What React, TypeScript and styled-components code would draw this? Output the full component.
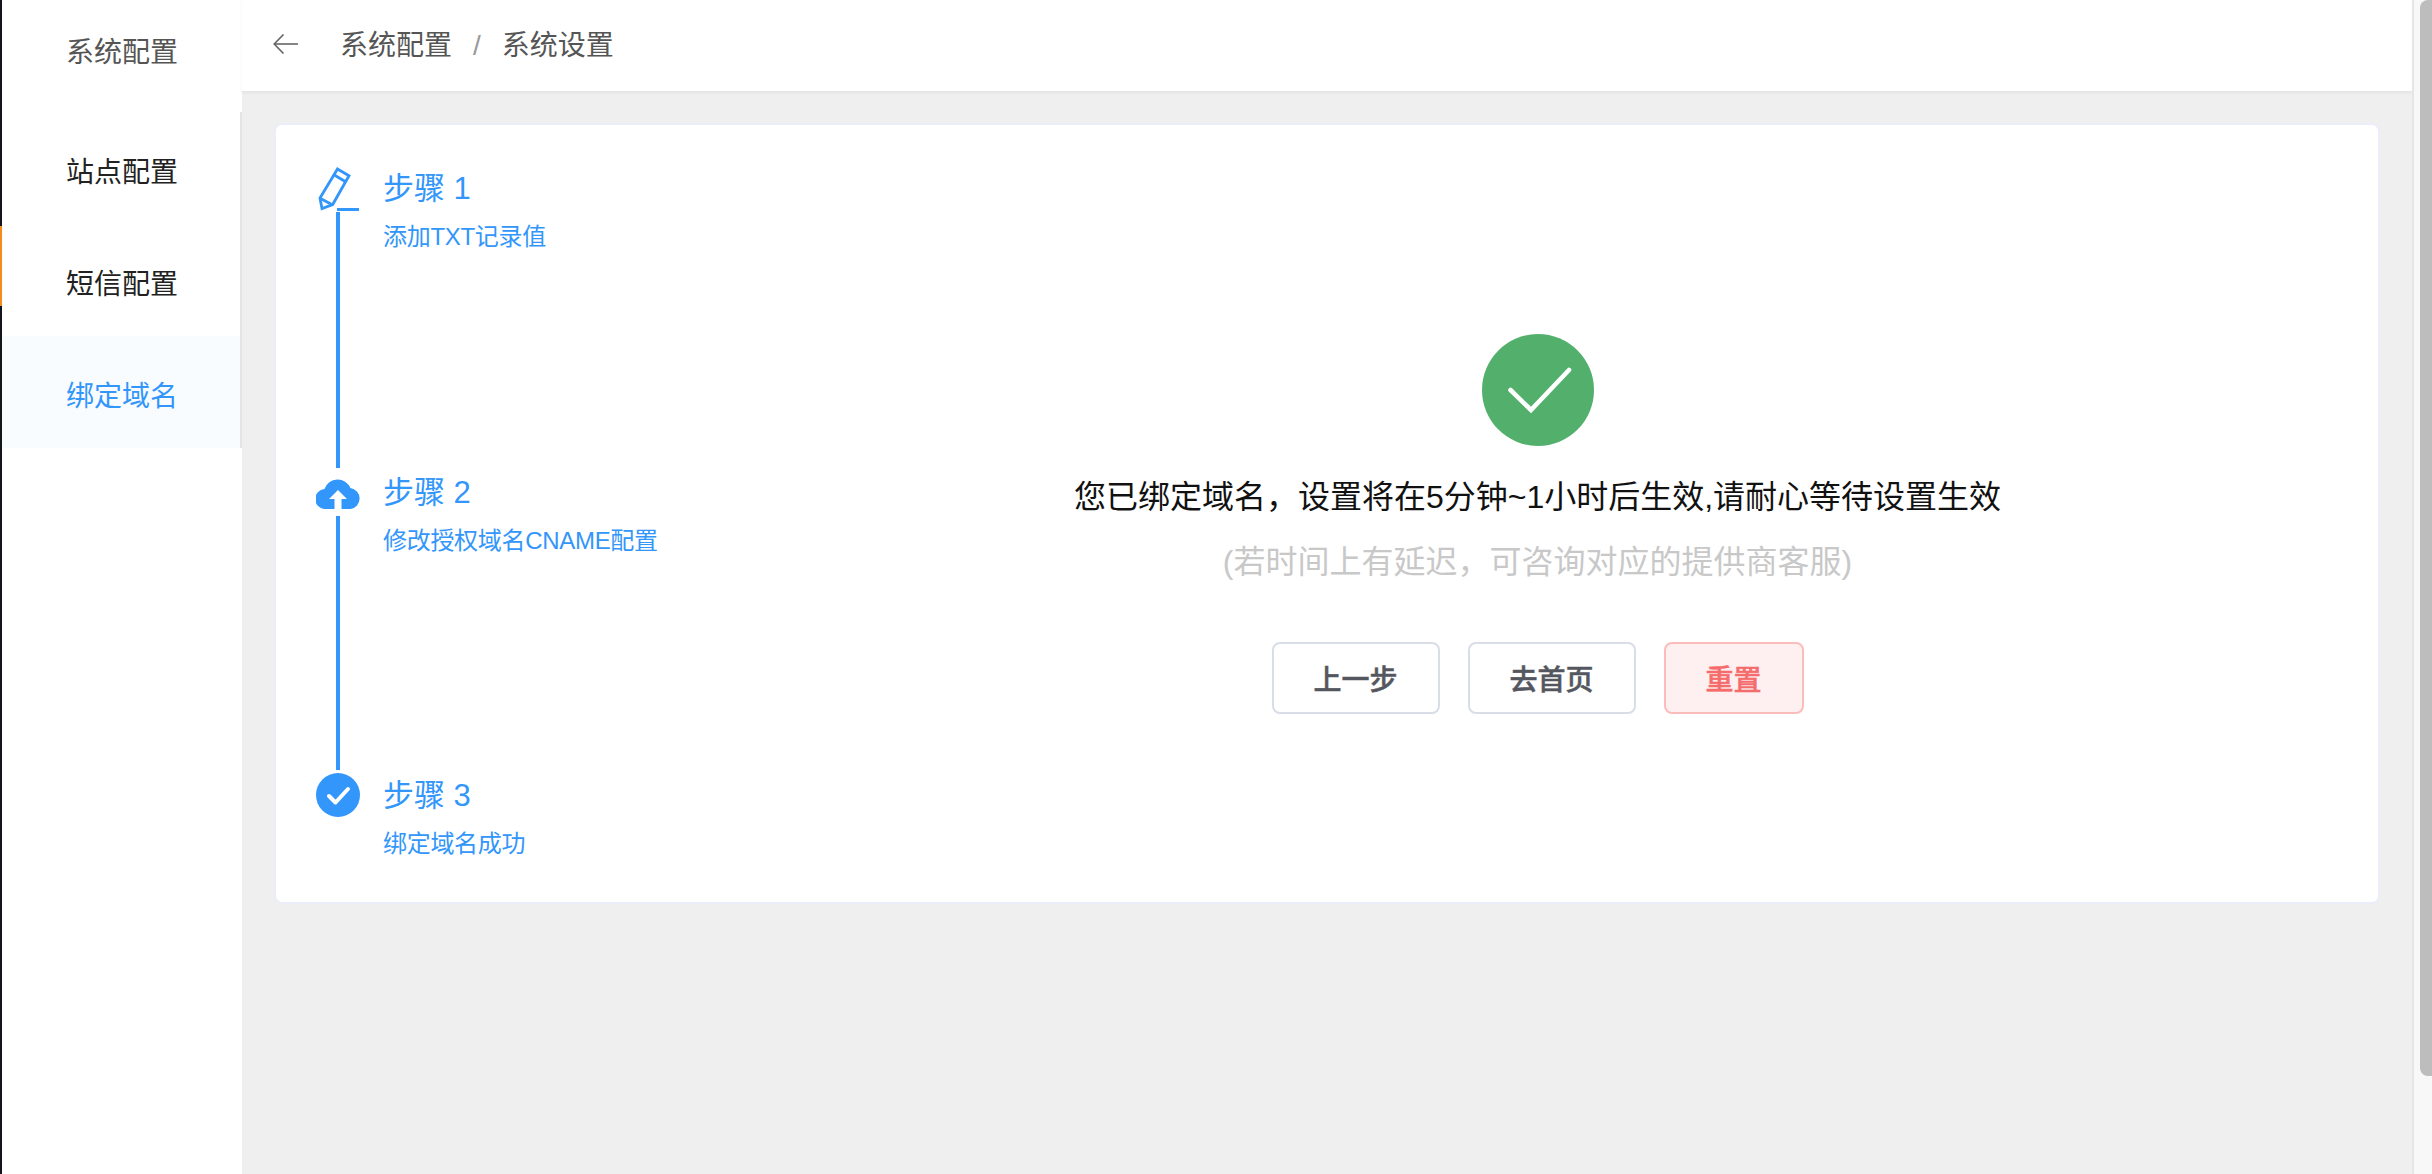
import React from "react";
import styled, { createGlobalStyle } from "styled-components";

const Global = createGlobalStyle`
  html, body { margin: 0; padding: 0; height: 100%; overflow: hidden; }
  body { font-family: "Liberation Sans", "Noto Sans CJK SC", sans-serif; background: #eee; }
  #root { height: 100%; }
  * { box-sizing: border-box; }
`;

const blue = "#3296fa";

const Page = styled.div`
  display: flex;
  width: 2432px;
  height: 1174px;
  background: #efefef;
`;
const Rail = styled.div`
  width: 2px;
  flex: none;
  display: flex;
  flex-direction: column;
`;
const RailDark = styled.div<{ $h: number }>`
  height: ${(p) => p.$h}px;
  background: #14151c;
`;
const RailMark = styled.div`
  height: 80px;
  background: #f58a1f;
`;
const Sidebar = styled.aside`
  width: 240px;
  flex: none;
  background: #fff;
  display: flex;
  flex-direction: column;
`;
const SideTitle = styled.div`
  height: 112px;
  padding: 35px 0 0 64px;
  font-size: 28px;
  line-height: 36px;
  color: #555;
`;
const SideItem = styled.div<{ $active?: boolean }>`
  height: 112px;
  padding: 4px 0 0 64px;
  display: flex;
  align-items: center;
  font-size: 28px;
  color: ${(p) => (p.$active ? blue : "#222")};
  background: ${(p) => (p.$active ? "#f8fcff" : "#fff")};
  border-right: 2px solid #e4e4e4;
`;
const Main = styled.main`
  flex: 1;
  min-width: 0;
  display: flex;
  flex-direction: column;
`;
const TopBar = styled.header`
  height: 92px;
  flex: none;
  background: #fff;
  display: flex;
  align-items: center;
  padding: 0 0 4px 31px;
  border-bottom: 1px solid #e6e6e6;
  box-shadow: 0 1px 3px rgba(0, 0, 0, 0.05);
  font-size: 28px;
  color: #555;
`;
const Crumbs = styled.div`
  margin: 0 0 2px 42px;
  display: flex;
  align-items: baseline;
  gap: 21px;
`;
const Sep = styled.span`
  color: #999;
`;
const Content = styled.div`
  padding: 31px 0 0 32px;
`;
const Card = styled.section`
  width: 2106px;
  height: 781px;
  background: #fff;
  border: 2px solid #ecedfa;
  border-radius: 8px;
  display: flex;
`;
const Steps = styled.div`
  width: 421px;
  flex: none;
  padding: 42px 0 0 40px;
  display: flex;
  flex-direction: column;
`;
const Step = styled.div<{ $h: number }>`
  display: flex;
  height: ${(p) => p.$h}px;
`;
const Rule = styled.div<{ $mt: number; $h: number }>`
  width: 4px;
  margin-top: ${(p) => p.$mt}px;
  margin-left: 20px;
  height: ${(p) => p.$h}px;
  background: ${blue};
`;
const StepIcon = styled.div`
  width: 44px;
  flex: none;
  display: flex;
  flex-direction: column;
`;
const StepText = styled.div<{ $top: number }>`
  margin-left: 23px;
  margin-top: ${(p) => p.$top}px;
  color: ${blue};
`;
const StepTitle = styled.div`
  font-size: 31px;
  line-height: 40px;
  white-space: nowrap;
`;
const StepDesc = styled.div`
  font-size: 24px;
  line-height: 32px;
  margin-top: 12px;
  letter-spacing: -0.3px;
  white-space: nowrap;
`;
const Result = styled.div`
  flex: 1;
  display: flex;
  flex-direction: column;
  align-items: center;
  padding-top: 209px;
`;
const Badge = styled.div`
  width: 112px;
  height: 112px;
`;
const Message = styled.div`
  margin-top: 29px;
  font-size: 32px;
  line-height: 44px;
  color: #111;
  white-space: nowrap;
`;
const Hint = styled.div`
  margin-top: 21px;
  font-size: 32px;
  line-height: 44px;
  color: #c8c8c8;
  white-space: nowrap;
`;
const Buttons = styled.div`
  margin-top: 58px;
  display: flex;
  gap: 28px;
`;
const Btn = styled.button<{ $danger?: boolean; $w: number }>`
  width: ${(p) => p.$w}px;
  height: 72px;
  border-radius: 8px;
  font-family: "Noto Sans CJK SC", "Liberation Sans", sans-serif;
  font-size: 28px;
  font-weight: 500;
  -webkit-text-stroke: 0.5px currentColor;
  cursor: pointer;
  color: ${(p) => (p.$danger ? "#f56c6c" : "#555760")};
  background: ${(p) => (p.$danger ? "#fef0f0" : "#fff")};
  border: 2px solid ${(p) => (p.$danger ? "#fbbcbc" : "#d9dde8")};
`;
const Scrollbar = styled.div`
  width: 20px;
  flex: none;
  background: #f8f8f8;
  border-left: 2px solid #e6e6e6;
  padding-left: 6px;
`;
const Thumb = styled.div`
  height: 1076px;
  background: #bdbdbd;
  border-radius: 8px 0 0 8px;
`;

const Pencil = () => (
  <svg width="44" height="44" viewBox="0 0 44 44" fill="none" stroke={blue} strokeWidth="2.8" style={{ display: "block" }}>
    <path d="M21.5 2 L33 8.7 L16.7 37.5 L6 41.5 L4 31 Z" />
    <path d="M17.5 7.5 L30 15" />
    <path d="M4.5 31.5 L16.7 38" />
    <path d="M21 42.5 H43" strokeWidth="3" />
  </svg>
);
const Cloud = () => (
  <svg width="44" height="34" viewBox="0 0 44 34" style={{ display: "block" }}>
    <path
      fill={blue}
      d="M10 34 A10 10 0 0 1 8.5 14 A13.8 13.8 0 0 1 34.4 13 A10.6 10.6 0 0 1 34.5 34 Z"
    />
    <path fill="#fff" d="M22 15 L31 24 H25.5 V34 H18.5 V24 H13 Z" />
  </svg>
);
const Done = () => (
  <svg width="44" height="44" viewBox="0 0 44 44" style={{ display: "block" }}>
    <circle cx="22" cy="22" r="22" fill={blue} />
    <path d="M13 23 L19.5 29.5 L32 16" fill="none" stroke="#fff" strokeWidth="4" strokeLinecap="round" strokeLinejoin="round" />
  </svg>
);
const Back = () => (
  <svg width="25" height="20" viewBox="0 0 25 20" fill="none" stroke="#666" strokeWidth="1.6" style={{ display: "block" }}>
    <path d="M10.5 0.5 L1.2 10 L10.5 19.5" />
    <path d="M1.2 10 H25" />
  </svg>
);
const SuccessMark = () => (
  <svg width="112" height="112" viewBox="0 0 112 112" style={{ display: "block" }}>
    <circle cx="56" cy="56" r="56" fill="#52b06c" />
    <path d="M28.5 56 L49 76 L87 36" fill="none" stroke="#fff" strokeWidth="4.6" strokeLinecap="round" />
  </svg>
);

export default function App() {
  return (
    <Page>
      <Global />
      <Rail>
        <RailDark $h={226} />
        <RailMark />
        <RailDark $h={868} />
      </Rail>
      <Sidebar>
        <SideTitle>系统配置</SideTitle>
        <SideItem>站点配置</SideItem>
        <SideItem>短信配置</SideItem>
        <SideItem $active>绑定域名</SideItem>
      </Sidebar>
      <Main>
        <TopBar>
          <Back />
          <Crumbs>
            <span>系统配置</span>
            <Sep>/</Sep>
            <span>系统设置</span>
          </Crumbs>
        </TopBar>
        <Content>
          <Card>
            <Steps>
              <Step $h={308}>
                <StepIcon>
                  <Pencil />
                  <Rule $mt={1} $h={256} />
                </StepIcon>
                <StepText $top={2}>
                  <StepTitle>步骤 1</StepTitle>
                  <StepDesc>添加TXT记录值</StepDesc>
                </StepText>
              </Step>
              <Step $h={298}>
                <StepIcon>
                  <Cloud />
                  <Rule $mt={7} $h={254} />
                </StepIcon>
                <StepText $top={-2}>
                  <StepTitle>步骤 2</StepTitle>
                  <StepDesc>修改授权域名CNAME配置</StepDesc>
                </StepText>
              </Step>
              <Step $h={100}>
                <StepIcon>
                  <Done />
                </StepIcon>
                <StepText $top={3}>
                  <StepTitle>步骤 3</StepTitle>
                  <StepDesc>绑定域名成功</StepDesc>
                </StepText>
              </Step>
            </Steps>
            <Result>
              <Badge>
                <SuccessMark />
              </Badge>
              <Message>您已绑定域名，设置将在5分钟~1小时后生效,请耐心等待设置生效</Message>
              <Hint>(若时间上有延迟，可咨询对应的提供商客服)</Hint>
              <Buttons>
                <Btn $w={168}>上一步</Btn>
                <Btn $w={168}>去首页</Btn>
                <Btn $w={140} $danger>重置</Btn>
              </Buttons>
            </Result>
          </Card>
        </Content>
      </Main>
      <Scrollbar>
        <Thumb />
      </Scrollbar>
    </Page>
  );
}
